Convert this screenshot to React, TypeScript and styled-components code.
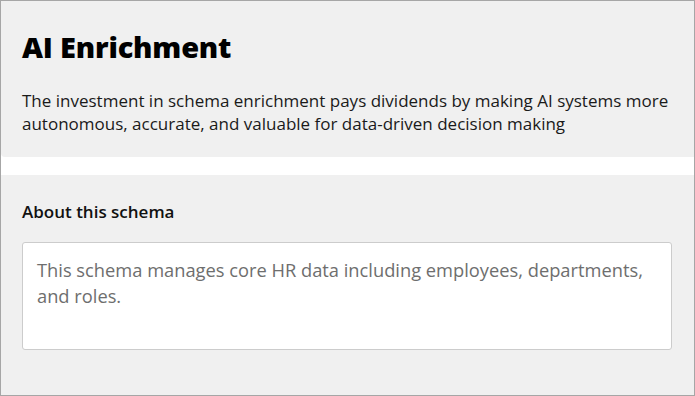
import React from "react";
import styled, { createGlobalStyle } from "styled-components";

const Global = createGlobalStyle`
  html, body { margin: 0; padding: 0; background: #ffffff; }
  * { box-sizing: border-box; }
`;

const Frame = styled.div`
  width: 695px;
  height: 396px;
  border: 1px solid #a6a6a6;
  background: #ffffff;
  display: flex;
  flex-direction: column;
  gap: 18px;
  font-family: "Segoe UI", "Open Sans", "Noto Sans", sans-serif;
  overflow: hidden;
`;

const Header = styled.header`
  background: #f0f0f0;
  height: 156px;
  padding: 26px 4px 0 21px;
  border-bottom-left-radius: 4px;
`;

const Title = styled.h1`
  margin: 0;
  font-size: 29px;
  font-weight: 800;
  line-height: 40px;
  color: #000000;
  letter-spacing: -0.2px;
`;

const Lead = styled.p`
  margin: 22px 0 0 0;
  font-size: 17px;
  line-height: 23px;
  color: #1a1a1a;
`;

const Section = styled.section`
  flex: 1;
  background: #f0f0f0;
  padding: 26px 22px 0 21px;
`;

const Label = styled.h2`
  margin: 0;
  font-size: 17px;
  font-weight: 600;
  line-height: 22px;
  color: #111111;
`;

const DescBox = styled.div`
  margin-top: 19px;
  height: 108px;
  background: #ffffff;
  border: 1px solid #cccccc;
  border-radius: 3px;
  padding: 14px 14px;
  font-size: 18.3px;
  line-height: 26px;
  color: #6e6e6e;
`;

export default function App() {
  return (
    <>
      <Global />
      <Frame>
        <Header>
          <Title>AI Enrichment</Title>
          <Lead>
            The investment in schema enrichment pays dividends by making AI systems more
            autonomous, accurate, and valuable for data-driven decision making
          </Lead>
        </Header>
        <Section>
          <Label>About this schema</Label>
          <DescBox>
            This schema manages core HR data including employees, departments, and roles.
          </DescBox>
        </Section>
      </Frame>
    </>
  );
}
